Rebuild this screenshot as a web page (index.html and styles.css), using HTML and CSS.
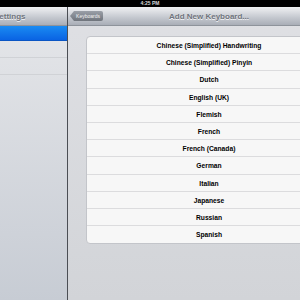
FILE: index.html
```html
<!DOCTYPE html>
<html lang="en">
<head>
    <meta charset="UTF-8">
    <title>Add New Keyboard</title>
    <link rel="stylesheet" href="styles.css">
</head>
<body>
    <div class="status-bar">4:25 PM</div>

    <div class="split">
        <div class="master">
            <div class="nav-bar master-nav">
                <span class="nav-title">Settings</span>
            </div>
            <div class="list">
                <div class="list-row selected"></div>
                <div class="list-row"></div>
                <div class="list-row"></div>
            </div>
        </div>

        <div class="detail">
            <div class="nav-bar detail-nav">
                <a href="#" class="back-btn">Keyboards</a>
                <span class="nav-title center">Add New Keyboard...</span>
            </div>
            <div class="group">
                <div class="cell">Chinese (Simplified) Handwriting</div>
                <div class="cell">Chinese (Simplified) Pinyin</div>
                <div class="cell">Dutch</div>
                <div class="cell">English (UK)</div>
                <div class="cell">Flemish</div>
                <div class="cell">French</div>
                <div class="cell">French (Canada)</div>
                <div class="cell">German</div>
                <div class="cell">Italian</div>
                <div class="cell">Japanese</div>
                <div class="cell">Russian</div>
                <div class="cell">Spanish</div>
            </div>
        </div>
    </div>
</body>
</html>
```

FILE: styles.css
```css
body {
    font-family: 'Liberation Sans', Arial, sans-serif;
    margin: 0;
    padding: 0;
    width: 300px;
    height: 300px;
    overflow: hidden;
    background: #d8dadf;
}
.status-bar {
    height: 7px;
    background: #000;
    color: #d6d6d6;
    font-size: 5px;
    font-weight: bold;
    line-height: 7px;
    text-align: center;
}
.split {
    display: flex;
    height: 293px;
}
.master {
    flex: 0 0 67px;
    border-right: 1px solid #4b4e54;
    background: linear-gradient(to bottom, #e6e7ea, #c7ccd4);
    overflow: hidden;
}
.detail {
    flex: 0 0 282px;
    background: linear-gradient(to bottom, #dfe0e4, #d2d4d8);
}
.nav-bar {
    height: 19px;
    display: flex;
    align-items: center;
    background: linear-gradient(to bottom, #f0f1f3, #c3c7ce 60%, #a9aeb7);
    border-bottom: 1px solid #8e939b;
    box-sizing: border-box;
    position: relative;
}
.nav-title {
    font-size: 8px;
    font-weight: bold;
    color: #6e737c;
    text-shadow: 0 1px 0 #f2f3f5;
    white-space: nowrap;
}
.master-nav .nav-title {
    margin-left: -6px;
}
.nav-title.center {
    flex: 1;
    text-align: center;
}
.back-btn {
    position: absolute;
    left: 2px;
    top: 4px;
    height: 10px;
    width: 33px;
    padding-left: 3px;
    box-sizing: border-box;
    background: linear-gradient(to bottom, #9a9fa7, #6f747c);
    color: #f4f4f4;
    font-size: 5px;
    line-height: 10px;
    text-align: center;
    text-decoration: none;
    clip-path: polygon(0 50%, 4px 0, 100% 0, 100% 100%, 4px 100%);
    border-radius: 0 2px 2px 0;
}
.list-row {
    height: 17px;
    border-bottom: 1px solid #d0d2d6;
    box-sizing: border-box;
}
.list-row.selected {
    height: 15px;
    background: linear-gradient(to bottom, #1a8bf2, #0a63e3);
    border-bottom: 1px solid #0a55c4;
}
.group {
    margin: 10px 18px 0;
    background: #f7f7f7;
    border: 1px solid #c3c5ca;
    border-radius: 4px;
}
.cell {
    height: 17.2px;
    line-height: 17px;
    text-align: center;
    font-size: 6.7px;
    font-weight: bold;
    color: #000;
    border-bottom: 1px solid #dcdcde;
    box-sizing: border-box;
}
.cell:last-child {
    border-bottom: none;
}
```
